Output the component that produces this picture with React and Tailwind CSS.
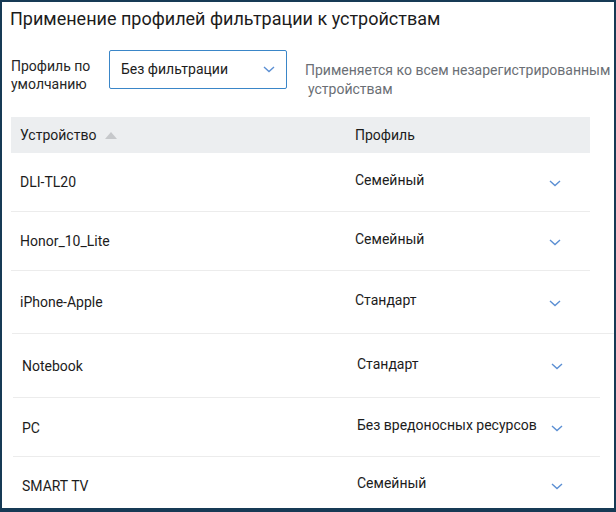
const topRows = [
  { name: 'DLI-TL20', profile: 'Семейный', h: 'h-[59px]' },
  { name: 'Honor_10_Lite', profile: 'Семейный', h: 'h-[59px]' },
  { name: 'iPhone-Apple', profile: 'Стандарт', h: 'h-[62px]' },
]

const bottomRows = [
  { name: 'Notebook', profile: 'Стандарт', h: 'h-[64px]' },
  { name: 'PC', profile: 'Без вредоносных ресурсов', h: 'h-[59px]' },
  { name: 'SMART TV', profile: 'Семейный', h: 'h-[56px]' },
]

function Chevron() {
  return (
    <svg width="12" height="7" viewBox="0 0 12 7" className="text-[#5b8fd3]">
      <path d="M1 1l5 4.5L11 1" fill="none" stroke="currentColor" strokeWidth="1.4" />
    </svg>
  )
}

export default function App() {
  return (
    <div
      className="w-[616px] h-[512px] bg-[#163a55] pt-[2px] pl-[2px] pr-[2px] pb-[4px]"
      style={{ fontFamily: 'Roboto, "Liberation Sans", sans-serif' }}
    >
      <div className="w-full h-full bg-white overflow-hidden text-[#1c1c1c]">
        <h1 className="pl-[8px] pt-[5px] text-[18px] leading-[24px]">
          Применение профилей фильтрации к устройствам
        </h1>

        <div className="flex items-start mt-[19px]">
          <div className="ml-[9px] w-[98px] pt-[7px] text-[14px] leading-[18px] text-[#262626]">
            Профиль по умолчанию
          </div>
          <div className="w-[178px] h-[39px] border border-[#3a86c8] rounded-[2px] flex items-center justify-between pl-[11px] pr-[11px] text-[14px]">
            <span>Без фильтрации</span>
            <Chevron />
          </div>
          <div className="ml-[18px] pt-[11px] text-[14px] leading-[19px] text-[#6b6f75]">
            Применяется ко всем незарегистрированным
            <br />
            <span className="pl-[3px]">устройствам</span>
          </div>
        </div>

        <div className="mt-[18px] ml-[9px] w-[579px]">
          <div className="h-[36px] bg-[#eceef0] flex items-center text-[14px]">
            <div className="w-[344px] pl-[9px] flex items-center gap-[9px]">
              <span>Устройство</span>
              <svg width="12" height="7" viewBox="0 0 12 7">
                <path d="M0 7L6 0l6 7z" fill="#c6c8cb" />
              </svg>
            </div>
            <div>Профиль</div>
          </div>
          {topRows.map((r, i) => (
            <div
              key={r.name}
              className={`${r.h} flex items-center text-[14px] ${i < topRows.length - 1 ? 'border-b border-[#ececec]' : ''}`}
            >
              <div className="w-[344px] pl-[9px] pt-[1px]">{r.name}</div>
              <div className="flex-1 -mt-[4px]">{r.profile}</div>
              <div className="w-[41px] pt-[2px]">
                <Chevron />
              </div>
            </div>
          ))}
        </div>

        <div className="border-t border-[#ececec] ml-[10px]" />

        <div className="ml-[11px] w-[587px]">
          {bottomRows.map((r, i) => (
            <div
              key={r.name}
              className={`${r.h} flex items-center text-[14px] ${i < bottomRows.length - 1 ? 'border-b border-[#ececec]' : ''}`}
            >
              <div className="w-[344px] pl-[9px] pt-[2px]">{r.name}</div>
              <div className="w-[194px] -mt-[3px]">{r.profile}</div>
              <div className="pt-[2px]">
                <Chevron />
              </div>
            </div>
          ))}
        </div>
      </div>
    </div>
  )
}
